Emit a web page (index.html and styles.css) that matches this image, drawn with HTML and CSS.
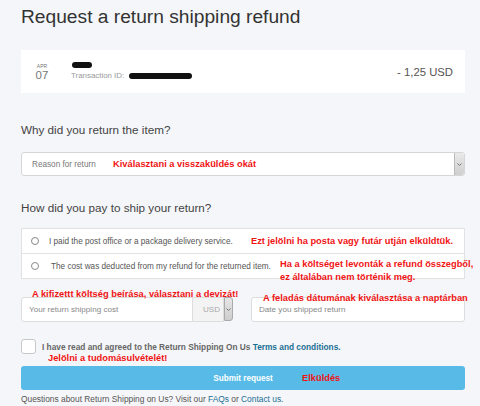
FILE: index.html
```html
<!DOCTYPE html>
<html>
<head>
  <title>Request a return shipping refund</title>
  <link rel="stylesheet" href="styles.css">
</head>
<body>
  <main class="page">
    <h1 class="title">Request a return shipping refund</h1>

    <div class="txn">
      <div class="txn-date">
        <span class="txn-month">APR</span>
        <span class="txn-day">07</span>
      </div>
      <div class="txn-info">
        <span class="blot blot-name"></span>
        <span class="txn-id">Transaction ID: <span class="blot blot-id"></span></span>
      </div>
      <div class="txn-amount">- 1,25 USD</div>
    </div>

    <h2 class="question q-reason">Why did you return the item?</h2>
    <div class="select">
      <span class="placeholder">Reason for return</span>
      <span class="note note-reason">Kiválasztani a visszaküldés okát</span>
      <span class="select-arrow">
        <svg width="5" height="3" viewBox="0 0 5 3"><path d="M0.5 0.5 L2.5 2.5 L4.5 0.5" fill="none" stroke="#777" stroke-width="1"/></svg>
      </span>
    </div>

    <h2 class="question q-pay">How did you pay to ship your return?</h2>
    <div class="options">
      <label class="option">
        <span class="radio"></span>
        <span class="option-text">I paid the post office or a package delivery service.</span>
        <span class="note note-post">Ezt jelölni ha posta vagy futár utján elküldtük.</span>
      </label>
      <label class="option option-alt">
        <span class="radio"></span>
        <span class="option-text">The cost was deducted from my refund for the returned item.</span>
        <span class="note note-deduct">Ha a költséget levonták a refund összegből,<br>ez általában nem történik meg.</span>
      </label>
    </div>

    <div class="cost-row">
      <div class="cost-group">
        <span class="note note-cost">A kifizettt költség beírása, választani a devizát!</span>
        <div class="field field-cost">Your return shipping cost</div>
        <div class="currency">USD</div>
        <div class="currency-arrow">
          <svg width="5" height="3" viewBox="0 0 5 3"><path d="M0.5 0.5 L2.5 2.5 L4.5 0.5" fill="none" stroke="#777" stroke-width="1"/></svg>
        </div>
      </div>
      <div class="date-group">
        <span class="note note-date">A feladás dátumának kiválasztása a naptárban</span>
        <div class="field field-date">Date you shipped return</div>
      </div>
    </div>

    <div class="agree">
      <span class="checkbox"></span>
      <span class="agree-text">I have read and agreed to the Return Shipping On Us <a href="#" class="link">Terms and conditions.</a></span>
      <span class="note note-agree">Jelölni a tudomásulvételét!</span>
    </div>

    <div class="submit">
      <span class="submit-label">Submit request</span>
      <span class="note note-submit">Elküldés</span>
    </div>

    <p class="help">Questions about Return Shipping on Us? Visit our <a href="#" class="link">FAQs</a> or <a href="#" class="link">Contact us</a>.</p>
  </main>
</body>
</html>
```

FILE: styles.css
```css
body {
  margin: 0;
  background-color: #f5f6f9;
  font-family: "Liberation Sans", Arial, sans-serif;
  color: #555;
}
.page {
  padding: 0 15px 0 21px;
}
.title {
  margin: 3px 0 0;
  font-size: 19.2px;
  line-height: 28px;
  font-weight: normal;
  color: #333;
}

/* transaction card */
.txn {
  margin-top: 19px;
  height: 43px;
  background-color: #fff;
  display: flex;
  align-items: center;
  padding: 0 12px 0 14px;
}
.txn-date {
  width: 14px;
  display: flex;
  flex-direction: column;
  align-items: center;
  color: #777;
}
.txn-month {
  font-size: 5px;
  line-height: 6px;
}
.txn-day {
  font-size: 11.5px;
  line-height: 12px;
}
.txn-info {
  margin-left: 22px;
  display: flex;
  flex-direction: column;
  flex: 1;
}
.txn-id {
  font-size: 7.9px;
  line-height: 10px;
  color: #999;
  display: flex;
  align-items: center;
  margin-top: 3px;
}
.blot {
  display: inline-block;
  background-color: #111;
  border-radius: 4px;
}
.blot-name {
  width: 20px;
  height: 6px;
  margin-left: 1px;
}
.blot-id {
  width: 63px;
  height: 6px;
  margin-left: 5px;
}
.txn-amount {
  font-size: 11.3px;
  color: #555;
}

/* questions */
.question {
  font-size: 11.7px;
  line-height: 16px;
  font-weight: normal;
  color: #444;
  margin: 0;
}
.q-reason {
  margin-top: 29px;
  margin-bottom: 14px;
}
.q-pay {
  margin-top: 24px;
  margin-bottom: 12px;
}

.select {
  position: relative;
  height: 22px;
  border: 1px solid #d6d6d6;
  border-radius: 3px;
  background-color: #fff;
  display: flex;
  align-items: center;
  padding-left: 10px;
}
.placeholder {
  font-size: 8.2px;
  color: #777;
}
.select-arrow {
  position: absolute;
  right: 0;
  top: 0;
  bottom: 0;
  width: 9px;
  border-left: 1px solid #bbb;
  border-radius: 0 3px 3px 0;
  background: linear-gradient(#e9e9e9, #cfcfcf);
  display: flex;
  align-items: center;
  justify-content: center;
}

/* annotations drawn over the form */
.note {
  position: absolute;
  font-size: 9.3px;
  line-height: 12px;
  font-weight: bold;
  color: #f01414;
  white-space: nowrap;
}
.note-reason { left: 91px; top: 5px; }
.note-post { left: 229px; top: 6px; }
.note-deduct { left: 258px; top: 4px; line-height: 13px; }
.note-cost { left: 11px; top: -9px; }
.note-date { left: 12px; top: -5px; }
.note-agree { left: 27px; top: 13px; }
.note-submit { left: 281px; top: 6px; }

/* radio options */
.options {
  border: 1px solid #e2e2e2;
  background-color: #fff;
}
.option {
  position: relative;
  height: 24px;
  display: flex;
  align-items: center;
  padding-left: 9px;
}
.option-alt {
  border-top: 1px solid #e2e2e2;
}
.radio {
  width: 6px;
  height: 6px;
  border: 1px solid #888;
  border-radius: 50%;
}
.option-text {
  margin-left: 10px;
  font-size: 8.2px;
  color: #555;
}
.option-alt .option-text {
  margin-left: 12px;
}

/* cost and date inputs */
.cost-row {
  margin-top: 18px;
  display: flex;
  gap: 18px;
}
.cost-group,
.date-group {
  position: relative;
  display: flex;
  height: 25px;
}
.date-group {
  flex: 1;
}
.field {
  box-sizing: border-box;
  height: 25px;
  border: 1px solid #ddd;
  background-color: #fff;
  font-size: 8.1px;
  color: #888;
  display: flex;
  align-items: center;
  padding-left: 7px;
}
.field-cost {
  width: 172px;
  border-radius: 3px 0 0 3px;
}
.field-date {
  flex: 1;
  border-radius: 3px;
}
.currency {
  box-sizing: border-box;
  width: 31px;
  height: 25px;
  background-color: #f3f3f3;
  border: 1px solid #ddd;
  border-left: none;
  font-size: 8.1px;
  color: #aaa;
  padding-left: 10px;
  overflow: hidden;
  white-space: nowrap;
  display: flex;
  align-items: center;
}
.currency-arrow {
  box-sizing: border-box;
  width: 9px;
  height: 24px;
  border: 1px solid #aaa;
  border-radius: 0 3px 3px 0;
  background: linear-gradient(#e6e6e6, #cdcdcd);
  display: flex;
  align-items: center;
  justify-content: center;
}

/* agreement */
.agree {
  position: relative;
  margin-top: 17px;
  display: flex;
  align-items: center;
}
.checkbox {
  box-sizing: border-box;
  width: 15px;
  height: 15px;
  border: 1px solid #c8c8c8;
  border-radius: 3px;
  background-color: #fff;
}
.agree-text {
  margin-left: 6px;
  font-size: 8.3px;
  font-weight: bold;
  color: #666;
}
.link {
  color: #1b6f94;
  text-decoration: none;
}

.submit {
  position: relative;
  margin-top: 12px;
  height: 24px;
  border-radius: 3px;
  background-color: #58bbe7;
  display: flex;
  align-items: center;
  justify-content: center;
}
.submit-label {
  font-size: 8.2px;
  font-weight: bold;
  color: #fff;
}

.help {
  margin: 3px 0 0;
  font-size: 8.4px;
  line-height: 12px;
  color: #555;
}
```
